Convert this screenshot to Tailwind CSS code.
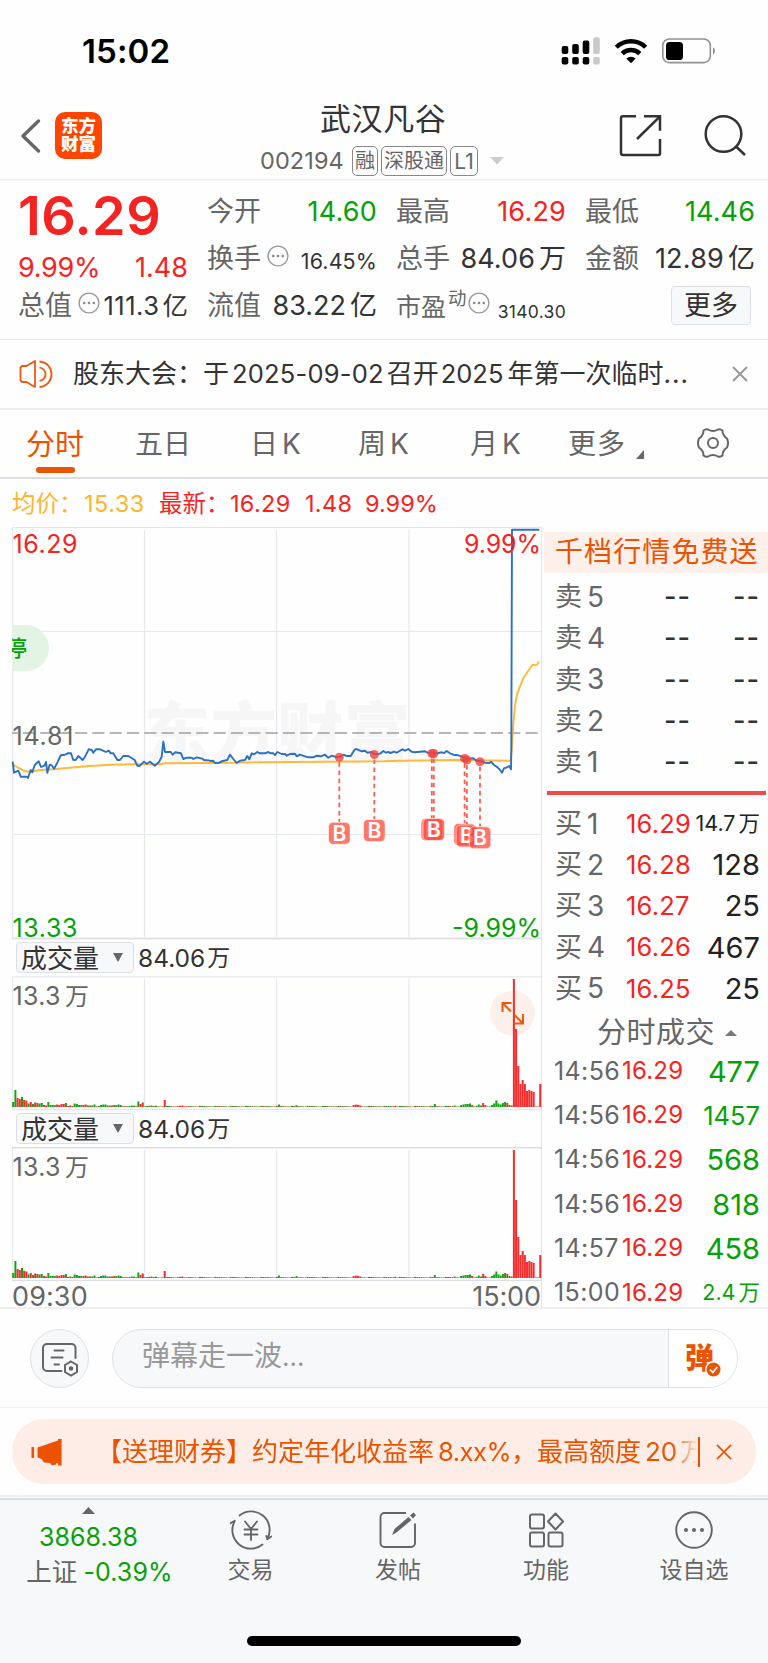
<!DOCTYPE html>
<html lang="zh-CN">
<head>
<meta charset="utf-8">
<title>武汉凡谷 002194</title>
<script src="https://cdn.jsdelivr.net/npm/@tailwindcss/browser@4"></script>
</head>
<body class="w-[768px] h-[1663px] overflow-hidden bg-[#fefefe] font-[Inter,'Noto_Sans_CJK_SC',sans-serif] leading-none text-[#333] whitespace-nowrap">
<svg class="hidden">
  <symbol id="dots" viewBox="0 0 22 22"><circle cx="11" cy="11" r="9.9" fill="none" stroke="#999" stroke-width="1.4"/><g fill="#888"><circle cx="6.2" cy="11" r="1.3"/><circle cx="11" cy="11" r="1.3"/><circle cx="15.8" cy="11" r="1.3"/></g></symbol>
</svg>

<!-- status bar -->
<div class="h-[90px] flex items-start justify-between pl-[82px] pr-[50px] pt-[35px]">
  <div class="text-[33px] leading-[33px] font-semibold text-black tracking-[0.1px]">15:02</div>
  <svg class="w-[158px] h-[32px]" viewBox="560 35 158 32">
    <g fill="#000">
      <rect x="561.7" y="46" width="6.6" height="8" rx="2"/><rect x="572.2" y="44" width="6.6" height="10" rx="2"/><rect x="582.7" y="40.5" width="6.6" height="13.5" rx="2"/>
      <rect x="561.7" y="57" width="6.6" height="7.6" rx="2"/><rect x="572.2" y="57" width="6.6" height="7.6" rx="2"/><rect x="582.7" y="57" width="6.6" height="7.6" rx="2"/>
    </g>
    <g fill="#c9c9c9"><rect x="593.2" y="37.3" width="6.6" height="16.7" rx="2"/><rect x="593.2" y="57" width="6.6" height="7.6" rx="2"/></g>
    <g fill="none" stroke="#000" stroke-width="4.4"><path d="M616.3 47.2a21 21 0 0 1 29.4 0"/><path d="M622.2 53.6a12.6 12.6 0 0 1 17.6 0"/></g>
    <path d="M626.3 58.6a7 7 0 0 1 9.4 0L631 63.2z" fill="#000"/>
    <rect x="662.8" y="39" width="47.5" height="23.6" rx="6.5" fill="none" stroke="#929292" stroke-width="1.6"/>
    <rect x="666" y="42" width="17" height="18" rx="3.6" fill="#000"/>
    <path d="M713 47.3a4.4 4.4 0 0 1 0 7.4z" fill="#929292"/>
  </svg>
</div>

<!-- title bar -->
<div class="h-[90px] flex items-start border-b border-[#ebebeb]">
  <svg class="w-[24px] h-[40px] mt-[26px] ml-[18px]" viewBox="18 116 24 40"><path d="M38.5 121L23 136l15.500 15" fill="none" stroke="#666" stroke-width="3.4" stroke-linecap="round" stroke-linejoin="round"/></svg>
  <div class="mt-[22px] ml-[13px] size-[47px] rounded-[10px] bg-[#ff4500] text-white font-black text-[17.500px] leading-[18px] text-center pt-[5px]">东方<br>财富</div>
  <div class="ml-[158px] w-[245px] pt-[12px]">
    <div class="text-[31px] leading-[34px] pl-[60px] tracking-[0.6px]">武汉凡谷</div>
    <div class="flex items-center mt-[9px] h-[31px] text-[#666]">
      <span class="text-[23.500px] tracking-[0.1px] w-[92px]">002194</span>
      <span class="w-[26px] h-[30px] border border-[#888] rounded-[5px] text-[20px] leading-[29px] text-center">融</span>
      <span class="ml-[3px] w-[66px] h-[30px] border border-[#888] rounded-[5px] text-[20px] leading-[29px] text-center">深股通</span>
      <span class="ml-[3px] w-[28px] h-[30px] border border-[#888] rounded-[5px] text-[21px] leading-[29px] text-center">L1</span>
      <svg class="w-[14px] h-[8px] ml-[12px]" viewBox="0 0 14 8"><path d="M0 0h14L7 7.500z" fill="#ccc"/></svg>
    </div>
  </div>
  <svg class="w-[134px] h-[48px] mt-[22px] ml-[110px]" viewBox="615 112 134 48" fill="none" stroke="#333" stroke-width="2.500">
    <path d="M636 116.300H623a2 2 0 0 0-2 2v34.700a2 2 0 0 0 2 2h35.500a1.500 1.500 0 0 0 1.500-1.500V139M644 116.300h16v14.500M660 116.300L637 139"/>
    <circle cx="723.500" cy="134" r="17.800"/><path d="M735.500 146l9.500 9"/>
  </svg>
</div>

<!-- quote summary -->
<div class="h-[160px] border-b border-[#e5e5e5] border-t border-t-[#f6f6f6] pl-[18px] flex gap-[19px] pt-[7px]">
  <div class="w-[170px]">
    <div class="h-[56px] text-[54px] leading-[56px] font-semibold text-[#f62323] tracking-[0.4px]">16.29</div>
    <div class="h-[47px] flex items-center justify-between text-[27px] text-[#f62323]"><span class="tracking-[-0.3px]">9.99%</span><span>1.48</span></div>
    <div class="h-[29px] flex items-center"><span class="text-[27px] text-[#666]">总值</span><svg class="size-[22px] ml-[6px] mb-[6px]"><use href="#dots"/></svg><span class="flex-1 flex justify-end items-baseline gap-[3px] text-[25.500px]"><span class="tracking-[0.5px]">111.3</span>亿</span></div>
  </div>
  <div class="w-[170px]">
    <div class="h-[47px] flex items-center justify-between text-[27px]"><span class="text-[#666]">今开</span><span class="text-[#08a008] tracking-[0.200px]">14.60</span></div>
    <div class="h-[47px] flex items-center text-[27px]"><span class="text-[#666]">换手</span><svg class="size-[22px] ml-[6px] mb-[6px]"><use href="#dots"/></svg><span class="flex-1 text-right text-[21.500px] tracking-[0.1px] pt-[6px]">16.45%</span></div>
    <div class="h-[47px] flex items-center justify-between text-[27px]"><span class="text-[#666]">流值</span><span class="flex items-baseline gap-[4px]"><span>83.22</span>亿</span></div>
  </div>
  <div class="w-[170px]">
    <div class="h-[47px] flex items-center justify-between text-[27px]"><span class="text-[#666]">最高</span><span class="text-[#f62323] tracking-[0.200px]">16.29</span></div>
    <div class="h-[47px] flex items-center justify-between text-[27px]"><span class="text-[#666]">总手</span><span class="flex items-baseline gap-[4px]"><span class="tracking-[0.1px]">84.06</span>万</span></div>
    <div class="h-[47px] flex items-center"><span class="text-[25px] text-[#666] pt-[3px]">市盈</span><span class="text-[18.500px] text-[#666] ml-[2px] mb-[14px]">动</span><svg class="size-[22px] ml-[1px] mb-[6px]"><use href="#dots"/></svg><span class="flex-1 text-right text-[17.500px] pt-[12px] tracking-[0.3px]">3140.30</span></div>
  </div>
  <div class="w-[170px]">
    <div class="h-[47px] flex items-center justify-between text-[27px]"><span class="text-[#666]">最低</span><span class="text-[#08a008] tracking-[0.1px]">14.46</span></div>
    <div class="h-[47px] flex items-center justify-between text-[27px]"><span class="text-[#666]">金额</span><span class="flex items-baseline gap-[4px]"><span class="tracking-[0.200px]">12.89</span>亿</span></div>
    <div class="h-[47px] flex items-center justify-end pr-[4px]"><span class="w-[80px] h-[39px] rounded-[4px] border border-[#dcdfe5] bg-[#f7f8fa] text-[27px] leading-[37px] text-center">更多</span></div>
  </div>
</div>

<!-- announcement -->
<div class="h-[70px] border-b-2 border-[#eee] flex items-center pl-[18px]">
  <svg class="w-[36px] h-[30px]" viewBox="18 359 36 30" fill="none" stroke="#ec5a10" stroke-width="1.800" stroke-linejoin="round"><path d="M35 361l-8.500 5H22l-1.500 1.500v13L22 382h4.500l8.500 5z"/><path d="M39.500 361.500c16 1.500 16 24 0 25.500M39.500 367.500c8 2 8 11.500 0 13.500"/></svg>
  <div class="ml-[19px] w-[616px] flex text-[26px]"><span>股东大会：于</span><span class="ml-[3px] text-[25.500px] tracking-[0.2px]">2025-09-02</span><span class="ml-[3px]">召开</span><span class="ml-[2px] text-[25.500px]">2025</span><span class="ml-[4px]">年第一次临时</span><span class="tracking-[1px]">...</span></div>
  <svg class="w-[16px] h-[16px] ml-[43px]" viewBox="0 0 16 16"><path d="M1 1l14 14M15 1L1 15" stroke="#999" stroke-width="2"/></svg>
</div>

<!-- period tabs -->
<div class="h-[69px] border-b-2 border-[#dcdde3] flex items-start text-[28px] leading-[69px] text-[#666]">
  <div class="ml-[26px] w-[58px] text-[29px] text-[#ec5300] flex flex-col items-center"><span class="h-[57px]">分时</span><span class="w-[39px] h-[6px] rounded-full bg-[#ec5300]"></span></div>
  <div class="ml-[51px] w-[115px]">五日</div>
  <div class="w-[108px]">日<span class="ml-[4px]">K</span></div>
  <div class="w-[112px]">周<span class="ml-[4px]">K</span></div>
  <div class="w-[98px]">月<span class="ml-[4px]">K</span></div>
  <div class="w-[68px] tracking-[1px]">更多</div>
  <svg class="w-[8px] h-[9px] mt-[40px]" viewBox="0 0 8 9"><path d="M8 0v9H0z" fill="#666"/></svg>
  <svg class="size-[32px] mt-[17px] ml-[53px]" viewBox="-16 -16 32 32" fill="none" stroke="#666" stroke-width="2" stroke-linejoin="round"><path d="M-9.500-12.500Q-7-14.500-5-13.500Q0-10.500 5-13.500Q7-14.500 9.500-12.500Q9.500-7.500 14-4.500Q16 0 14 4.500Q9.500 7.500 9.500 12.500Q7 14.500 5 13.500Q0 10.500-5 13.500Q-7 14.500-9.500 12.500Q-9.500 7.500-14 4.500Q-16 0-14-4.500Q-9.500-7.500-9.500-12.500z"/><circle r="5"/></svg>
</div>

<!-- legend -->
<div class="h-[48px] flex items-center pl-[12px] pt-[1px] text-[23.500px] text-[#f62323]">
  <span class="text-[#ffb52e] w-[72px]">均价：</span><span class="text-[#ffb52e] w-[75px] tracking-[0.500px]">15.33</span>
  <span class="w-[71px]">最新：</span><span class="w-[75px] tracking-[0.300px]">16.29</span><span class="w-[60px] tracking-[0.300px]">1.48</span><span>9.99%</span>
</div>

<!-- charts + order book -->
<div class="flex h-[782px] border-b-2 border-[#f0f0f2]">
  <div class="ml-[12px] w-[530px] h-full border-t border-r border-[#e3e5ea]">
    <svg class="block w-[530px] h-[412px] overflow-visible" viewBox="12 528 530 412" font-size="25">
      <g stroke="#e6e8ef" stroke-width="1.200"><path d="M144.500 530v407M276.500 530v407M409 530v407M12 631.500h530M12 834.500h530M12.500 527v412"/><path d="M12 938.500h530" stroke="#dfe1e6" stroke-width="2"/></g>
      <text x="144" y="757" font-size="66" font-weight="900" fill="#f6f6f6" textLength="266">东方财富</text>
      <clipPath id="tagclip"><rect x="12" y="620" width="40" height="56"/></clipPath>
      <path d="M12 625h14a23 23 0 0 1 0 46H12z" fill="#e3f4e4"/>
      <g clip-path="url(#tagclip)"><text x="5" y="656" font-size="22" font-weight="500" fill="#08a008">停</text></g>
      <path d="M537.700 733H12" stroke="#a0a0a0" stroke-width="1.600" stroke-dasharray="12.200 5.130"/>
      <path id="avg" fill="none" stroke="#ffb938" stroke-width="1.900"/>
      <path id="price" fill="none" stroke="#2b70c4" stroke-width="1.900" stroke-linejoin="round"/>
      <g id="marks"></g>
      <g fill="#f62323"><text x="12.500" y="553" textLength="65">16.29</text><text x="464" y="553" textLength="77">9.99%</text></g>
      <text x="12.500" y="744.500" fill="#666" textLength="61">14.81</text>
      <g fill="#08a008"><text x="12.500" y="936.500" textLength="65">13.33</text><text x="452" y="936.500" textLength="89">-9.99%</text></g>
    </svg>
    <div class="h-[36px] pl-[4px] pt-[2px] flex items-start text-[25px] leading-[32px]"><span class="w-[118px] h-[31px] rounded-[4px] border border-[#dcdfe5] bg-[#f7f8fa] text-[26px] leading-[31px] pl-[4px] flex">成交量<svg class="w-[10px] h-[9px] ml-[14px] mt-[10px]" viewBox="0 0 10 9"><path d="M0 0h10L5 9z" fill="#666"/></svg></span><span class="ml-[4px] text-[24.500px]">84.06</span><span class="ml-[2px] text-[23px]">万</span></div>
    <svg class="block w-[530px] h-[134px]" viewBox="12 976 530 134" font-size="25">
      <g stroke="#e6e8ef" stroke-width="1.200"><path d="M144.500 979v127M276.500 979v127M409 979v127M12.500 977v132M12 976.800h530M12 1109.300h530"/></g>
      <text x="12.500" y="1004.500" fill="#666" textLength="48">13.3</text><text x="65" y="1004.500" fill="#666" font-size="24">万</text>
      <circle cx="512.500" cy="1013" r="22.500" fill="#fdf0ea"/>
      <g class="bars"></g>
      <g fill="none" stroke="#ec5a10" stroke-width="2"><path d="M502.500 1012v-9h9M502.500 1003l8.500 8.500"/><path d="M523 1014v9.500h-9M523 1023.500l-9-9"/></g>
    </svg>
    <div class="h-[37px] pl-[4px] pt-[3px] flex items-start text-[25px] leading-[32px]"><span class="w-[118px] h-[31px] rounded-[4px] border border-[#dcdfe5] bg-[#f7f8fa] text-[26px] leading-[31px] pl-[4px] flex">成交量<svg class="w-[10px] h-[9px] ml-[14px] mt-[10px]" viewBox="0 0 10 9"><path d="M0 0h10L5 9z" fill="#666"/></svg></span><span class="ml-[4px] text-[24.500px]">84.06</span><span class="ml-[2px] text-[23px]">万</span></div>
    <svg class="block w-[530px] h-[134px]" viewBox="12 976 530 134" font-size="25">
      <g stroke="#e6e8ef" stroke-width="1.200"><path d="M144.500 979v127M276.500 979v127M409 979v127M12.500 977v132"/><path d="M12 976.800h530M12 1109.500h530" stroke="#dcdee3" stroke-width="1.600"/></g>
      <text x="12.500" y="1004.500" fill="#666" textLength="48">13.3</text><text x="65" y="1004.500" fill="#666" font-size="24">万</text>
      <g class="bars"></g>
    </svg>
    <div class="h-[26px] flex justify-between text-[27px] leading-[31px] text-[#666]"><span class="tracking-[0.1px]">09:30</span><span class="tracking-[-0.1px]">15:00</span></div>
  </div>
  <div class="flex-1 pl-[2px] pt-[5px]">
    <div class="h-[41px] bg-[#fdf0ea] text-[#ec5300] text-[28px] leading-[41px] pl-[11px] tracking-[1.100px]">千档行情免费送</div>
    <div id="asks" class="pt-[3px] h-[215px]"></div>
    <div class="ml-[3px] w-[219px] h-[4px] mt-[3px] bg-[#f04a4c]"></div>
    <div id="bids" class="pt-[8px] h-[220px]"></div>
    <div class="h-[35px] flex items-center pl-[53px] text-[29px] text-[#666] tracking-[0.500px]">分时成交<svg class="w-[12px] h-[6px] ml-[10px]" viewBox="0 0 12 6"><path d="M0 6h12L6 0z" fill="#777"/></svg></div>
    <div id="trades" class="-mt-[1px]"></div>
  </div>
</div>

<!-- comment bar -->
<div class="h-[99px] border-b border-[#efefef] flex items-start pt-[20px] pl-[30px]">
  <div class="size-[59px] rounded-full border border-[#dfe1e8] bg-[#f7f8fa] flex items-center justify-center">
    <svg class="w-[38px] h-[38px]" viewBox="41 1340 38 38" fill="none" stroke="#666" stroke-width="2" stroke-linecap="round"><path d="M61.500 1371H47a4 4 0 0 1-4-4v-19a4 4 0 0 1 4-4h24.500a4 4 0 0 1 4 4v10M54.500 1350.500h9M51.500 1357.500h11M54.500 1364.500h4.500"/><path d="M71 1361.500l6 3.500v7l-6 3.500-6-3.500v-7z"/><circle cx="71" cy="1368.500" r="1.300" fill="#666"/></svg>
  </div>
  <div class="ml-[23px] w-[626px] h-[59px] rounded-full border border-[#dfe1e8] bg-[#f7f8fa] flex overflow-hidden">
    <div class="w-[556px] border-r border-[#dfe1e8] pl-[29px] text-[28px] leading-[52px] text-[#999]">弹幕走一波<span class="text-[26px]">...</span></div>
    <div class="flex-1 bg-white flex items-center pl-[15px]">
      <svg class="w-[38px] h-[38px]" viewBox="684 1339 38 38"><text x="685" y="1368" font-size="29" font-weight="900" fill="#ec5300">弹</text><circle cx="713.500" cy="1368.500" r="8.500" fill="#fff"/><circle cx="713.500" cy="1368.500" r="7" fill="#ec5300"/><path d="M710 1368.500l2.800 3 4.500-5.500" fill="none" stroke="#fff" stroke-width="1.800"/></svg>
    </div>
  </div>
</div>

<!-- promo banner -->
<div class="h-[89px] border-b-2 border-[#eee] px-[12px] pt-[11px]">
  <div class="h-[65px] rounded-[32px] bg-[#fdede6] flex items-center pl-[18px] text-[#ec5300]">
    <svg class="w-[34px] h-[30px]" viewBox="30 1437 34 30" fill="#ec5300"><rect x="31.500" y="1447" width="2.600" height="11"/><path d="M37.500 1447.500L58 1440.500v-1.500h3.600v26.500H58v-2l-2 -.5v1.500l-4 1-2-2.500-6-.5-2.500-3.500-4-1.500z"/></svg>
    <div class="ml-[32px] w-[602px] overflow-hidden flex text-[26px] leading-[34px] [mask-image:linear-gradient(to_right,#000_576px,transparent_602px)]"><span>【送理财券】约定年化收益率</span><span class="ml-[4px] text-[25.500px] w-[73px] tracking-[-0.500px]">8.xx%</span><span class="w-[26px]">，</span><span>最高额度</span><span class="ml-[4px]">20</span><span class="ml-[3px]">万</span></div>
    <span class="w-[1.500px] h-[30px] bg-[#ec5300]"></span>
    <svg class="size-[16px] ml-[16px]" viewBox="0 0 17 17"><path d="M1 1l15 15M16 1L1 16" stroke="#ec5300" stroke-width="1.800"/></svg>
  </div>
</div>

<!-- bottom navigation -->
<div class="mt-[1px] h-[165px] border-t-2 border-[#dcdfe5] bg-[#f7f8fa] flex flex-col justify-between items-center pb-[17px]">
  <div class="w-full flex text-[#666] text-[23px]">
    <div class="w-[177px] flex flex-col items-center pt-[7px] text-[25px]">
      <svg class="w-[13px] h-[7px]" viewBox="0 0 13 7"><path d="M0 7h13L6.500 0z" fill="#666"/></svg>
      <span class="text-[#08a008] leading-[30px] mt-[8px]">3868.38</span>
      <span class="flex leading-[30px] mt-[5px] ml-[22px]"><span class="text-[25.500px]">上证</span><span class="ml-[6px] text-[#08a008] tracking-[0.1px]">-0.39%</span></span>
    </div>
    <div class="w-[147px] flex flex-col items-center pt-[9px]"><svg class="size-[42px]" viewBox="-21 -21 42 42" fill="none" stroke="#666" stroke-width="1.900" stroke-linecap="round" stroke-linejoin="round"><path d="M-11.500-14.500A18.500 18.500 0 0 1 16.500 8.500M16.500 8.500L15.300 6M16.200 9.300l4.300-2.800M11.500 14.500A18.500 18.500 0 0 1-16.500-8.500M-16.300-9.300l-4.200 2.600"/><path d="M-6-8.500L0-1l6-7.500M0-1V10M-6.500-.5h13M-6.500 4.500h13"/></svg><span class="leading-[30px] mt-[4px]">交易</span></div>
    <div class="w-[148px] flex flex-col items-center pt-[9px]"><svg class="size-[42px]" viewBox="-21 -21 42 42" fill="none" stroke="#666" stroke-width="1.900"><path d="M8-17H-13.500a4 4 0 0 0-4 4V13a4 4 0 0 0 4 4h26.500a4 4 0 0 0 4-4V-6.500"/><path d="M-6 5l2.500-6L10.500-13l3 3L-1.500 2.500zM12-14.500l3.500-3 2.500 2.500-3 3.500z" fill="#666" stroke="none"/></svg><span class="leading-[30px] mt-[4px]">发帖</span></div>
    <div class="w-[148px] flex flex-col items-center pt-[9px]"><svg class="size-[42px]" viewBox="-21 -21 42 42" fill="none" stroke="#666" stroke-width="2"><rect x="-16" y="-15.500" width="14" height="14" rx="2"/><rect x="-16" y="2.500" width="14" height="14" rx="2"/><rect x="2.500" y="2.500" width="14" height="14" rx="2"/><path d="M9.500-16.500l7.500 8-7.500 8-7.500-8z" stroke-linejoin="round"/></svg><span class="leading-[30px] mt-[4px]">功能</span></div>
    <div class="w-[148px] flex flex-col items-center pt-[9px]"><svg class="size-[42px]" viewBox="-21 -21 42 42"><circle r="17.800" fill="none" stroke="#666" stroke-width="1.900"/><g fill="#666"><circle cx="-8" r="2"/><circle r="2"/><circle cx="8" r="2"/></g></svg><span class="leading-[30px] mt-[4px]">设自选</span></div>
  </div>
  <div class="w-[274px] h-[10px] rounded-full bg-black"></div>
</div>

<script>
const $ = s => document.querySelector(s);
// order book
$('#asks').innerHTML = [5,4,3,2,1].map(n => `<div class="h-[41.3px] flex items-center text-[27px] text-[#666] pl-[11px]"><span>卖</span><span class="ml-[5px] w-[77px] text-[28px]">${n}</span><span class="w-[69px] text-[#333] font-medium tracking-[1px]">--</span><span class="text-[#333] font-medium tracking-[1px]">--</span></div>`).join('');
const qty = (q, c) => /万/.test(q)
  ? `<span class="flex-1 text-right text-[21.5px] ${c}">${q.replace('万','')}<span class="ml-[3px]">万</span></span>`
  : `<span class="flex-1 text-right ${q.length > 3 ? 'text-[25.5px]' : 'text-[29px]'} ${c}">${q}</span>`;
$('#bids').innerHTML = [['1','16.29','14.7万'],['2','16.28','128'],['3','16.27','25'],['4','16.26','467'],['5','16.25','25']].map(([n,p,q]) =>
  `<div class="h-[41.2px] flex items-center text-[27px] text-[#666] pl-[11px] pr-[8px]"><span>买</span><span class="ml-[5px] w-[39px] text-[28px]">${n}</span><span class="w-[65px] text-[25.5px] text-[#f62323] tracking-[0.2px]">${p}</span>${qty(q,'text-[#222]')}</div>`).join('');
$('#trades').innerHTML = [['14:56','477'],['14:56','1457'],['14:56','568'],['14:56','818'],['14:57','458'],['15:00','2.4万']].map(([t,q]) =>
  `<div class="h-[44.3px] flex items-center text-[25px] text-[#666] pl-[10px] pr-[8px]"><span class="w-[68px] tracking-[0.4px]">${t}</span><span class="w-[60px] text-[24px] text-[#f62323] tracking-[0.2px]">${'16.29'}</span>${qty(q,'text-[#08a008]')}</div>`).join('');

// intraday price: two sampled segments
const a = [38,305,42,338,55,332,62,350,80,350,84,354,92,330,97,337,104,315,116,304,123,321,134,316,138,306,142,338,149,314,155,316,162,326,172,308,182,286,195,284,203,280,213,280,220,300,228,299,235,288,248,300,255,290,266,268,275,270,280,278,288,268,300,268,318,276,326,272,332,280,340,280,352,300,360,300,370,288,385,288,404,300,412,317,420,317,432,305,440,311,450,305,464,317,477,306,485,290,490,245,495,276,512,276,518,284,525,277,543,280,550,297,560,293,575,293,580,297,590,292,607,296,613,301,625,301,633,303,640,302,645,309,657,308,665,304,682,300,690,284,700,297,710,309,720,302,735,300,742,288,748,298,755,280,762,283,772,276,780,280,795,280,805,276,812,280,820,280,825,285,832,276,845,282,855,282,860,287,870,282,885,281,890,289,900,284,915,289,925,292,940,292,950,287,962,289,975,284,985,293,995,287,1005,290,1017,292,1030,284,1040,288,1052,288,1060,275,1065,268,1072,268,1085,274,1095,272,1102,278,1115,276];
const b = [223,313,235,312,242,310,250,303,258,308,265,306,272,309,282,305,290,308,300,302,308,298,315,302,325,297,335,305,345,307,360,305,375,304,385,309,400,310,415,309,425,307,432,309,440,303,450,310,460,314,475,316,485,320,498,327,520,325,530,333,540,333,555,338,568,339,573,335,582,345,590,350,598,357,606,368,612,355,620,352,628,348,633,358,634,300,636,-361,718,-361];
const pts = (v, ox, oy) => v.reduce((r, n, i) => r + (i % 2 ? ',' + (oy + n/3).toFixed(1) : ' ' + (ox + n/3).toFixed(1)), '');
$('#price').setAttribute('d', 'M' + pts(a,0,660) + pts(b,300,650));
$('#avg').setAttribute('d', 'M' + pts([38,312,45,318,60,326,75,334,95,335,115,331,160,328,200,324,260,319,330,314,400,313,480,313,495,310,640,309,780,307,1152,304],0,660) + pts([300,332,470,330,632,332,636,290,640,225,645,165,652,130,670,85,685,62,697,45,711,44,717,35],300,650));
// buy markers
$('#marks').innerHTML = [[339.3,757.3],[374.3,754.5],[431.8,753.5],[433.8,753.5],[464.6,758.4],[466.9,760],[480,761.7]].map(([x,y]) =>
  `<circle cx="${x}" cy="${y}" r="4.5" fill="#f0443c" opacity=".8"/><path d="M${x} ${y+5}V${y+65}" stroke="#f8604f" stroke-width="1.8" stroke-dasharray="4.5 3.6"/><rect x="${x-10.8}" y="${y+65}" width="21.6" height="22" rx="4.5" fill="#ff4a38" fill-opacity=".75" stroke="#fff" stroke-opacity=".6"/><text x="${x}" y="${y+83.3}" font-size="21" font-weight="600" fill="#fff" text-anchor="middle">B</text>`).join('');
// volume bars: positive = up (red), negative = down (green)
const v = [-5,-17,9,8,-10,7,6.500,-3.500,5,-3,4.500,4,-3.500,-4,2,1.500,-5,-2,-2,-1.800,2.500,2,3,3,-4,1,1.500,1,-3.500,-3,-2,-2,2,2.500,-1.500,1.500,-1.500,-2.500,.7,-1,-2,-2.500,-2.500,-1.500,1.500,-1.500,2,-1.800,-2.500,-2,.7,.8,-.8,-1,-1.500,-1.300,.8,-5.500,3,4.500,-.7,-1,-1.200,1.500,-1,-1.300,.6,-.5,.7,7,-1,-1,-.8,.6,.6,.8,1.200,1.500,.7,.7];
for (let i = v.length; i < 229; i++) v.push(((i*7)%5 < 2 ? 1 : -1) * (.5 + ((i*13)%7)/10));
Object.assign(v, {121:-2.5,129:-1.8,155:2,156:2.4,157:2.200,158:1.500,174:1.200,192:-3,201:-1.500,204:-2,205:-2.500,206:-3,207:-3,208:-3.500,209:2,212:-2.500,213:-1.500,214:4,215:2,218:-2,219:-3.500,220:-6.500,221:-3.500,222:-2.500,223:-4,224:-5,225:4,226:-2,227:1.500,228:-3});
v.push(128,78,41,23,27,23,16,17,16,15,.5,.5,23);
v.splice(228,1);
const bars = v.map((h,i) => `<rect x="${(12.2+i*2.196).toFixed(2)}" y="${1107-Math.abs(h)}" width="2" height="${Math.abs(h)}" fill="${h>0?'#f62c2c':'#12a512'}"/>`).join('');
document.querySelectorAll('.bars').forEach(g => g.innerHTML = bars);
</script>
</body>
</html>
